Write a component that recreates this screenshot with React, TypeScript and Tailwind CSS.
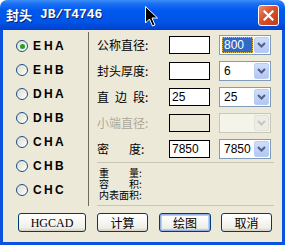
import React from "react";

const cjk = "font-['SimSun','Noto_Sans_CJK_SC',sans-serif]";

const radios = ["EHA", "EHB", "DHA", "DHB", "CHA", "CHB", "CHC"];

function Radio({ label, checked }: { label: string; checked?: boolean }) {
  return (
    <div className="flex h-[24px] items-center">
      <span className="flex h-[12px] w-[12px] items-center justify-center rounded-full border border-[#1c5180] bg-[linear-gradient(135deg,#dcd9cf,#ffffff)]">
        {checked && <span className="h-[5px] w-[5px] rounded-full bg-[#21a121]" />}
      </span>
      <span className="ml-[5px] flex font-['Liberation_Sans',sans-serif] text-[12px] font-bold leading-none text-black">
        {label.split("").map((c, i) => (
          <span key={i} className="w-[11px]">
            {c}
          </span>
        ))}
      </span>
    </div>
  );
}

function DropArrow({ disabled }: { disabled?: boolean }) {
  return (
    <span
      className={`flex h-full w-[15px] items-center justify-center rounded-[2px] border ${
        disabled
          ? "border-[#e3e2d8] bg-[#eeede5]"
          : "border-[#bccdf5] bg-[linear-gradient(to_bottom,#d0defc,#b3c7f5)]"
      }`}
    >
      <svg width="9" height="6" viewBox="0 0 9 6">
        <path
          d="M1 1 L4.5 4.5 L8 1"
          fill="none"
          stroke={disabled ? "#c9c7ba" : "#4d6185"}
          strokeWidth="2"
        />
      </svg>
    </span>
  );
}

function Combo({ value, selected, disabled }: { value?: string; selected?: boolean; disabled?: boolean }) {
  return (
    <div
      className={`flex h-[20px] w-[52px] items-stretch border p-[1px] ${
        disabled ? "border-[#c9c7ba] bg-[#f5f4ea]" : "border-[#7f9db9] bg-white"
      }`}
    >
      <div className="flex flex-1 items-center pl-[1px]">
        {value && (
          <span
            className={`font-['Liberation_Sans',sans-serif] text-[12px] leading-[14px] ${
              selected
                ? "w-[31px] border border-dotted border-[#e8b94d] bg-[#316ac5] pl-[1px] text-white"
                : "pl-[2px] text-black"
            }`}
          >
            {value}
          </span>
        )}
      </div>
      <DropArrow disabled={disabled} />
    </div>
  );
}

function TextBox({ value, disabled }: { value?: string; disabled?: boolean }) {
  return (
    <div
      className={`flex h-[18px] w-[41px] items-center border border-black pl-[2px] font-['Liberation_Sans',sans-serif] text-[12px] text-black ${
        disabled ? "bg-[#ece9d8]" : "bg-white"
      }`}
    >
      {value}
    </div>
  );
}

function Row({ label, value, combo, disabled, selected }: {
  label: React.ReactNode;
  value?: string;
  combo?: string;
  disabled?: boolean;
  selected?: boolean;
}) {
  return (
    <div className="flex h-[20px] items-center">
      <div className={`w-[72px] text-[12px] leading-none ${disabled ? "text-[#aca899]" : "text-black"}`}>{label}</div>
      <TextBox value={value} disabled={disabled} />
      <div className="ml-[9px]">
        <Combo value={combo} disabled={disabled} selected={selected} />
      </div>
    </div>
  );
}

function Button({ children, isDefault, className = "" }: { children: React.ReactNode; isDefault?: boolean; className?: string }) {
  return (
    <div
      className={`flex h-[19px] items-center justify-center rounded-[3px] border border-[#003c74] bg-[linear-gradient(to_bottom,#ffffff,#f0f0ea_80%,#d6d0c5)] text-[12px] leading-none text-black ${
        isDefault ? "shadow-[inset_0_0_0_1px_#97aee2,inset_0_0_0_2px_#bccef8]" : ""
      } ${className}`}
    >
      {children}
    </div>
  );
}

export default function App() {
  return (
    <div className={`relative flex h-[245px] w-[285px] flex-col ${cjk}`}>
      {/* title bar */}
      <div className="flex h-[30px] items-center rounded-t-[7px] bg-[linear-gradient(to_bottom,#3d8ff8_0%,#1c70f4_12%,#0058ee_35%,#0055e8_70%,#004ad9_88%,#0040c8_100%)] pl-[6px] pr-[6px]">
        <span className="flex items-center text-[13px] font-bold text-white [text-shadow:1px_1px_0_#0a1e6e]">
          <span>封头</span>
          <span className="ml-[8px] font-['Liberation_Mono',monospace] text-[13px]">JB/T4746</span>
        </span>
        <div className="ml-auto flex h-[21px] w-[21px] items-center justify-center rounded-[3px] border border-white bg-[linear-gradient(135deg,#ee8a6c,#d8502e_45%,#c13b18)]">
          <svg width="11" height="11" viewBox="0 0 11 11">
            <path d="M1.5 1.5 L9.5 9.5 M9.5 1.5 L1.5 9.5" stroke="white" strokeWidth="2.2" strokeLinecap="square" />
          </svg>
        </div>
      </div>

      {/* client */}
      <div className="flex flex-1 flex-col border-x-[3px] border-b-[3px] border-[#0b52e0] bg-[#ece9d8]">
        <div className="flex h-[177px]">
          <div className="w-[85px] pl-[13px] pt-[4px]">
            {radios.map((r, i) => (
              <Radio key={r} label={r} checked={i === 0} />
            ))}
          </div>
          <div className="mt-[2px] mb-[1px] w-px bg-[#6d6b60]" />
          <div className="flex flex-1 flex-col pl-[8px] pr-[8px] pt-[5px]">
            <div className="flex flex-col gap-[6px]">
              <Row label="公称直径:" combo="800" selected />
              <Row label="封头厚度:" combo="6" />
              <Row label={<>直&ensp;边&ensp;段:</>} value="25" combo="25" />
              <Row label="小端直径:" disabled />
              <Row
                label={
                  <span className="flex">
                    <span>密</span>
                    <span className="w-[20px]" />
                    <span>度:</span>
                  </span>
                }
                value="7850"
                combo="7850"
              />
            </div>
            <div className="mt-[3px] h-px bg-[#c8c5b4]" />
            <div className="mt-[4px] flex flex-col pl-[2px] text-[10px] leading-[11px] text-black">
              <span className="flex">
                <span>重</span>
                <span className="w-[20px]" />
                <span>量:</span>
              </span>
              <span className="flex">
                <span>容</span>
                <span className="w-[20px]" />
                <span>积:</span>
              </span>
              <span>内表面积:</span>
            </div>
            <div className="mt-[5px] h-px bg-[#c8c5b4]" />
          </div>
        </div>

        <div className="mt-[6px] flex">
          <Button className="ml-[15px] w-[68px] font-['Liberation_Serif',serif]">HGCAD</Button>
          <Button className="ml-[11px] w-[51px]">计算</Button>
          <Button className="ml-[11px] w-[52px]" isDefault>绘图</Button>
          <Button className="ml-[10px] w-[51px]">取消</Button>
        </div>
      </div>

      {/* mouse cursor */}
      <svg className="absolute left-[145px] top-[6px]" width="14" height="22" viewBox="0 0 14 22">
        <path
          d="M0.5 0.5 L0.5 17 L4.5 13 L7.5 20 L10 19 L7 12 L12.5 12 Z"
          fill="black"
          stroke="white"
          strokeWidth="1"
        />
      </svg>
    </div>
  );
}
